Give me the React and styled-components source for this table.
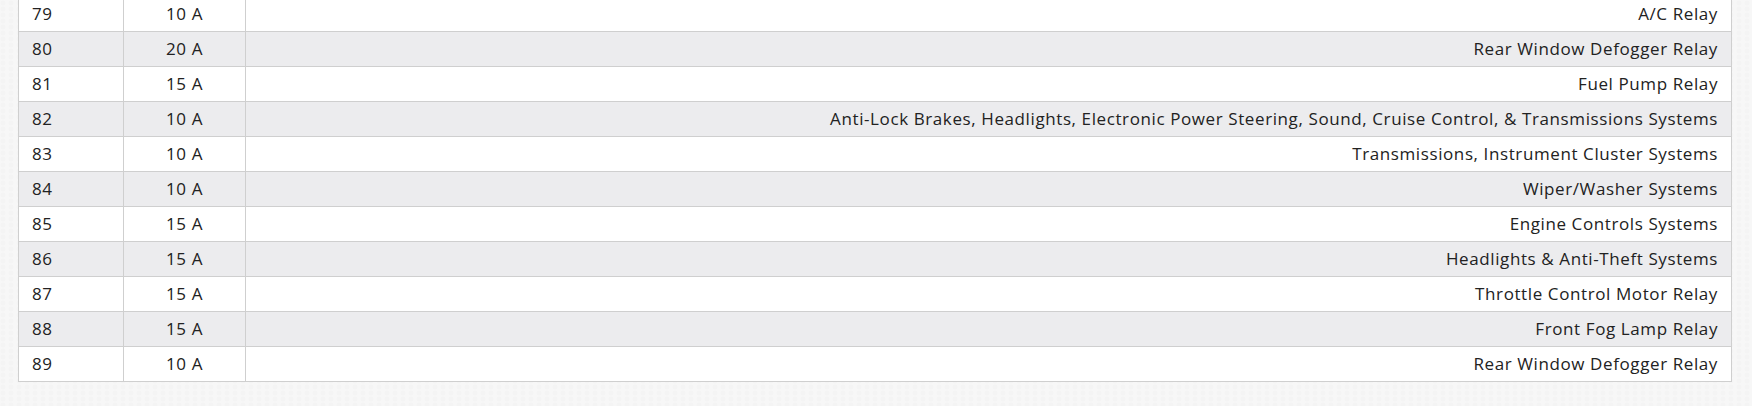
import React from "react";
import styled, { createGlobalStyle } from "styled-components";

const GlobalStyle = createGlobalStyle`
    html, body {
        margin: 0;
        padding: 0;
    }
    body {
        background-color: #f7f7f7;
        background-image:
            radial-gradient(circle at 3px 3px, rgba(0, 0, 0, 0.012) 2px, transparent 3px);
        background-size: 8px 6px;
        font-family: "Open Sans", "Noto Sans", sans-serif;
        color: #222;
    }
`;

const fuses = [
    ["79", "10 A", "A/C Relay"],
    ["80", "20 A", "Rear Window Defogger Relay"],
    ["81", "15 A", "Fuel Pump Relay"],
    ["82", "10 A", "Anti-Lock Brakes, Headlights, Electronic Power Steering, Sound, Cruise Control, & Transmissions Systems"],
    ["83", "10 A", "Transmissions, Instrument Cluster Systems"],
    ["84", "10 A", "Wiper/Washer Systems"],
    ["85", "15 A", "Engine Controls Systems"],
    ["86", "15 A", "Headlights & Anti-Theft Systems"],
    ["87", "15 A", "Throttle Control Motor Relay"],
    ["88", "15 A", "Front Fog Lamp Relay"],
    ["89", "10 A", "Rear Window Defogger Relay"],
];

const App = () => {
    return (
        <>
            <GlobalStyle />
            <Page>
                <Table>
                    <colgroup>
                        <col style={{ width: 105 }} />
                        <col style={{ width: 122 }} />
                        <col />
                    </colgroup>
                    <tbody>
                        {fuses.map(([num, amp, desc], i) => (
                            <Row key={num} $striped={i % 2 === 1}>
                                <NumCell>{num}</NumCell>
                                <AmpCell>{amp}</AmpCell>
                                <DescCell>{desc}</DescCell>
                            </Row>
                        ))}
                    </tbody>
                </Table>
            </Page>
        </>
    );
};

const Page = styled.div`
    padding: 0 20px 0 18px;
    margin-top: -4px;
`;

const Table = styled.table`
    width: 100%;
    border-collapse: collapse;
    table-layout: fixed;
    font-size: 17px;
    line-height: 22px;
    letter-spacing: 0.6px;
`;

const Row = styled.tr`
    height: 35px;
    background: ${(p) => (p.$striped ? "#ececee" : "#ffffff")};
`;

const Cell = styled.td`
    padding: 0 13px;
    border: 1px solid #cfcfcf;
    vertical-align: middle;
    white-space: nowrap;
`;

const NumCell = styled(Cell)`
    text-align: left;
`;

const AmpCell = styled(Cell)`
    text-align: center;
`;

const DescCell = styled(Cell)`
    text-align: right;
`;

export default App;
